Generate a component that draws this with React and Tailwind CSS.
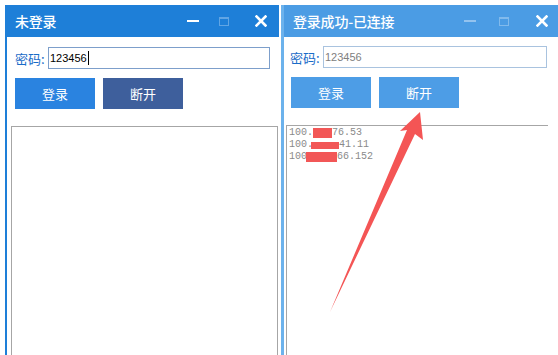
import React from "react";

const cjk = { fontFamily: '"Microsoft YaHei", "Noto Sans CJK SC", sans-serif' };

function TitleBar({ title, bg, dim, icons }) {
  // icons: gaps between minimize / maximize / close, and right padding
  return (
    <div className={`h-[32px] ${bg} flex items-center text-white shrink-0`} style={cjk}>
      <span className={`text-[14px] font-medium leading-none ${title.pad} tracking-[-0.2px]`}>{title.text}</span>
      <div className="flex items-center ml-auto">
        <div className={`w-[12px] h-[2px] bg-white ${dim ? "opacity-40" : ""}`} />
        <div className={`${icons.gap1} w-[10px] h-[9px] border border-white border-t-2 opacity-30`} />
        <svg className={`${icons.gap2}`} width="12" height="12" viewBox="0 0 12 12">
          <path d="M1.5 1.5 L10.5 10.5 M10.5 1.5 L1.5 10.5" stroke="white" strokeWidth="2.6" strokeLinecap="square" />
        </svg>
      </div>
      <div className={icons.right} />
    </div>
  );
}

function Field({ value, muted, border, inputW, caret }) {
  return (
    <div className="flex items-center h-[22px]" style={cjk}>
      <span className="w-[33px] text-[13px] text-[#1a6cc8] leading-none">密码:</span>
      <div className={`${inputW} h-[22px] border ${border} bg-white flex items-center pl-[1px]`}>
        <span
          className={`text-[11px] leading-none ${muted ? "text-[#808080]" : "text-black"}`}
          style={{ fontFamily: '"Liberation Sans", Arial, sans-serif' }}
        >
          {value}
        </span>
        {caret && <span className="w-[1px] h-[14px] bg-black ml-[1px]" />}
      </div>
    </div>
  );
}

function Btn({ children, bg }) {
  return (
    <div
      className={`w-[80px] h-[31px] ${bg} text-white text-[13px] flex items-center justify-center`}
      style={cjk}
    >
      {children}
    </div>
  );
}

const lines = [
  { pre: "100.", post: "76.53", mask: "ml-[0px] w-[19px] h-[10px] -mt-[1px]" },
  { pre: "100.", post: "41.11", mask: "-ml-[2px] w-[28px] h-[7px] mt-[1px]" },
  { pre: "100", post: "66.152", mask: "-ml-[1px] w-[31px] h-[10px]" },
];

export default function App() {
  return (
    <div className="relative w-[558px] h-[355px] overflow-hidden bg-white flex pt-[5px] pl-[5px]">
      {/* left window: not logged in */}
      <div className="w-[274px] flex flex-col border-l-2 border-[#1e7fd8]">
        <TitleBar
          title={{ text: "未登录", pad: "pl-[8px]" }}
          bg="bg-[#1e7fd8]"
          icons={{ gap1: "ml-[20px]", gap2: "ml-[26px]", right: "w-[12px]" }}
        />
        <div className="flex-1 flex flex-col pl-[8px] bg-white">
          <div className="mt-[10px]">
            <Field value="123456" border="border-[#7d9fcb]" inputW="w-[222px]" caret />
          </div>
          <div className="mt-[9px] flex gap-[8px]">
            <Btn bg="bg-[#2a83e0]">登录</Btn>
            <Btn bg="bg-[#3e5f9c]">断开</Btn>
          </div>
          <div className="mt-[17px] -ml-[4px] w-[267px] flex-1 border border-b-0 border-[#a6a6a6]" />
        </div>
      </div>

      {/* right window: connected */}
      <div className="ml-[2px] flex-1 flex flex-col border-l-[3px] border-[#6cb2ec]">
        <TitleBar
          title={{ text: "登录成功-已连接", pad: "pl-[9px]" }}
          bg="bg-[#4b9ce4]"
          dim
          icons={{ gap1: "ml-[23px]", gap2: "ml-[27px]", right: "w-[10px]" }}
        />
        <div className="flex-1 flex flex-col pl-[6px] bg-white">
          <div className="mt-[9px]">
            <Field value="123456" muted border="border-[#a9c3df]" inputW="w-[224px]" />
          </div>
          <div className="mt-[9px] ml-[1px] flex gap-[8px]">
            <Btn bg="bg-[#4d9de6]">登录</Btn>
            <Btn bg="bg-[#4d9de6]">断开</Btn>
          </div>
          <div className="mt-[17px] -ml-[4px] w-[262px] flex-1 border-l border-t border-[#a6a6a6] pl-[2px] pt-[1px]">
            {lines.map((l, i) => (
              <div
                key={i}
                className="flex items-center h-[12px] text-[10px] leading-none text-[#8a8a8a]"
                style={{ fontFamily: '"Liberation Mono", "Courier New", monospace' }}
              >
                <span>{l.pre}</span>
                <span className={`${l.mask} bg-[#f25757]`} />
                <span>{l.post}</span>
              </div>
            ))}
          </div>
        </div>
      </div>

      {/* annotation arrow */}
      <svg className="absolute left-0 top-0 pointer-events-none" width="558" height="355">
        <polygon
          points="420,112 423,140 415,134 330,312 407,130 400,131"
          fill="#f45555"
        />
      </svg>
    </div>
  );
}
